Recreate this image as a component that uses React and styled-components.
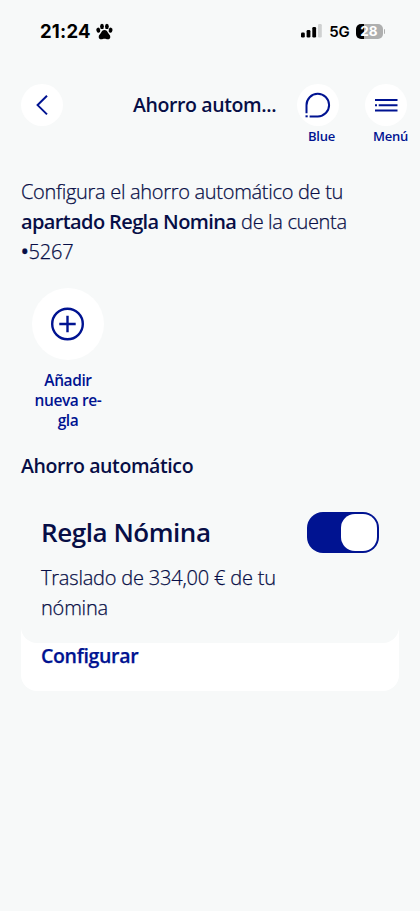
import styled, { createGlobalStyle } from "styled-components"

const GlobalStyle = createGlobalStyle`
    * {
        box-sizing: border-box;
    }
    body {
        margin: 0;
        background: #f7f9f9;
        color: #070e46;
        font-family: "Open Sans", sans-serif;
    }
    p, h1, h2, h3 {
        margin: 0;
    }
    button {
        border: none;
        padding: 0;
        background: none;
        font-family: inherit;
    }
    svg {
        display: block;
    }
`
const Screen = styled.div`
    min-height: 911px;
    overflow: hidden;
`
const StatusBar = styled.div`
    height: 84px;
    padding: 19px 35px 0 40px;
    display: flex;
    align-items: flex-start;
    justify-content: space-between;
    font-family: Inter, sans-serif;
    color: #000;
`
const Clock = styled.div`
    display: flex;
    align-items: center;
    gap: 5px;
    height: 24px;
    font-size: 18.5px;
    font-weight: 700;
    letter-spacing: 0.2px;
`
const StatusIcons = styled.div`
    display: flex;
    align-items: center;
    height: 24px;
`
const Network = styled.span`
    margin: 0 6px 0 7px;
    font-size: 15px;
    font-weight: 600;
    letter-spacing: -0.2px;
`
const Battery = styled.div`
    width: 27px;
    height: 15px;
    border-radius: 5px;
    background: linear-gradient(to right, #000 28%, #aeafaf 28%);
    color: #fff;
    font-size: 13.5px;
    font-weight: 700;
    line-height: 15px;
    text-align: center;
`
const BatteryTip = styled.div`
    width: 1.5px;
    height: 5px;
    margin-left: 1px;
    border-radius: 0 2px 2px 0;
    background: #aeafaf;
`
const Header = styled.header`
    height: 93px;
    padding: 0 12px 0 21px;
    display: flex;
    align-items: flex-start;
`
const RoundButton = styled.button`
    width: ${props => props.$size}px;
    height: ${props => props.$size}px;
    border-radius: 50%;
    background: #fff;
    color: #001391;
    display: flex;
    justify-content: center;
    align-items: center;
`
const Title = styled.h1`
    width: 164px;
    margin-left: 70px;
    font-size: 19.5px;
    font-weight: 600;
    line-height: 41px;
    letter-spacing: -0.38px;
    white-space: nowrap;
`
const HeaderAction = styled.div`
    width: 43px;
    & + & {
        margin-left: 25px;
    }
`
const HeaderLabel = styled.p`
    padding-left: ${props => props.$indent}px;
    color: #001391;
    font-size: 13px;
    font-weight: 600;
    line-height: 20px;
    letter-spacing: -0.25px;
    white-space: nowrap;
`
const Main = styled.main`
    padding: 0 21px;
`
const Intro = styled.p`
    font-size: 20px;
    font-weight: 300;
    line-height: 30px;
    white-space: nowrap;
`
const Line = styled.span`
    display: block;
    letter-spacing: ${props => props.$spacing};
    -webkit-text-stroke: 0.25px currentColor;
    strong {
        font-weight: 600;
        letter-spacing: -0.62px;
        -webkit-text-stroke: 0;
    }
`
const Bullet = styled.span`
    font-weight: 600;
`
const NewRule = styled.div`
    width: 94px;
    margin-top: 21px;
    display: flex;
    flex-direction: column;
    align-items: center;
`
const NewRuleLabel = styled.p`
    margin-top: 10px;
    color: #001391;
    font-size: 15.5px;
    font-weight: 600;
    line-height: 20px;
    letter-spacing: -0.4px;
    text-align: center;
`
const SectionTitle = styled.h2`
    margin-top: 21px;
    font-size: 19.5px;
    font-weight: 600;
    line-height: 30px;
    letter-spacing: -0.4px;
`
const Card = styled.section`
    margin-top: 11px;
    border-radius: 0 0 16px 16px;
    background: #fff;
`
const CardBody = styled.div`
    height: 151px;
    padding: 20px 20px 0 20px;
    border-radius: 0 0 16px 16px;
    background: #f7f9f9;
`
const CardTop = styled.div`
    display: flex;
    justify-content: space-between;
    align-items: center;
    height: 41px;
`
const CardTitle = styled.h3`
    padding-bottom: 2px;
    font-size: 26px;
    font-weight: 600;
    letter-spacing: -0.45px;
`
const Toggle = styled.button`
    width: 72px;
    height: 41px;
    padding: 2px;
    border-radius: 16px;
    background: #001391;
    display: flex;
    justify-content: flex-end;
`
const Knob = styled.span`
    width: 36px;
    height: 37px;
    border-radius: 14px;
    background: #fff;
`
const CardText = styled.p`
    margin-top: 10px;
    font-size: 20px;
    font-weight: 300;
    line-height: 30px;
`
const CardAction = styled.button`
    display: block;
    height: 48px;
    padding: 0 20px 23px;
    color: #001391;
    font-size: 19.5px;
    font-weight: 600;
    line-height: 25px;
    letter-spacing: -0.32px;
    -webkit-text-stroke: 0.25px currentColor;
`

function PawIcon() {
    return (
        <svg width="17" height="17" viewBox="0 0 17 17">
            <ellipse cx="2.3" cy="7.2" rx="1.9" ry="2.6" transform="rotate(-12 2.3 7.2)" />
            <ellipse cx="6" cy="3.4" rx="1.9" ry="2.7" />
            <ellipse cx="10.9" cy="3.4" rx="1.9" ry="2.7" />
            <ellipse cx="14.6" cy="7.2" rx="1.9" ry="2.6" transform="rotate(12 14.6 7.2)" />
            <path d="M8.5 7C6.6 7 5.7 8.4 5 9.8C4.2 11.3 2.7 12 2.7 13.9C2.7 15.4 3.8 16.3 5.2 16.3C6.5 16.3 7.2 15.7 8.5 15.7S10.5 16.3 11.8 16.3C13.2 16.3 14.3 15.4 14.3 13.9C14.3 12 12.8 11.3 12 9.8C11.3 8.4 10.4 7 8.5 7Z" />
        </svg>
    )
}

function Signal() {
    return (
        <svg width="21" height="14" viewBox="0 0 21 14">
            <rect x="0" y="8.5" width="3.8" height="5" rx="1.2" />
            <rect x="5.6" y="6" width="3.8" height="7.5" rx="1.2" />
            <rect x="11.3" y="3" width="3.8" height="10.5" rx="1.2" />
            <rect x="17" y="0" width="3.8" height="13.5" rx="1.2" fill="#cfd1d1" />
        </svg>
    )
}

function BackIcon() {
    return (
        <svg width="42" height="42" viewBox="0 0 42 42" fill="none" stroke="currentColor" strokeWidth="2">
            <path d="M26 11.8L16.6 21.1L26 30.4" />
        </svg>
    )
}

function ChatIcon() {
    return (
        <svg width="42" height="42" viewBox="0 0 42 42" fill="none" stroke="currentColor" strokeWidth="2">
            <path d="M9.5 29.3V21.3A11.3 11.3 0 1 1 20.8 32.4H12.6" />
            <path d="M8.5 32.3H10.7" />
        </svg>
    )
}

function MenuIcon() {
    return (
        <svg width="42" height="42" viewBox="0 0 42 42" fill="none" stroke="currentColor" strokeWidth="2">
            <path d="M10 16H32.5M13.7 21.2H32.5M10 26.4H32.5M10 21.2H12" />
        </svg>
    )
}

function PlusIcon() {
    return (
        <svg width="34" height="34" viewBox="0 0 34 34" fill="none" stroke="currentColor" strokeWidth="2.4">
            <circle cx="16.5" cy="17" r="15.3" />
            <path d="M16.5 8.8V25.2M8.3 17H24.7" />
        </svg>
    )
}

export default function App() {
    return (
        <Screen>
            <GlobalStyle />
            <StatusBar>
                <Clock>
                    21:24
                    <PawIcon />
                </Clock>
                <StatusIcons>
                    <Signal />
                    <Network>5G</Network>
                    <Battery>28</Battery>
                    <BatteryTip />
                </StatusIcons>
            </StatusBar>
            <Header>
                <RoundButton $size={42} aria-label="Volver">
                    <BackIcon />
                </RoundButton>
                <Title>Ahorro autom...</Title>
                <HeaderAction>
                    <RoundButton $size={42}>
                        <ChatIcon />
                    </RoundButton>
                    <HeaderLabel $indent={11}>Blue</HeaderLabel>
                </HeaderAction>
                <HeaderAction>
                    <RoundButton $size={42}>
                        <MenuIcon />
                    </RoundButton>
                    <HeaderLabel $indent={8}>Menú</HeaderLabel>
                </HeaderAction>
            </Header>
            <Main>
                <Intro>
                    <Line $spacing="-0.3px">Configura el ahorro automático de tu</Line>
                    <Line $spacing="-0.35px"><strong>apartado Regla Nomina</strong> de la cuenta</Line>
                    <Line $spacing="-0.15px"><Bullet>•</Bullet>5267</Line>
                </Intro>
                <NewRule>
                    <RoundButton $size={72}>
                        <PlusIcon />
                    </RoundButton>
                    <NewRuleLabel>
                        Añadir<br />nueva re-<br />gla
                    </NewRuleLabel>
                </NewRule>
                <SectionTitle>Ahorro automático</SectionTitle>
                <Card>
                    <CardBody>
                        <CardTop>
                            <CardTitle>Regla Nómina</CardTitle>
                            <Toggle role="switch" aria-checked="true">
                                <Knob />
                            </Toggle>
                        </CardTop>
                        <CardText>
                            <Line $spacing="-0.2px">Traslado de 334,00 € de tu</Line>
                            <Line $spacing="-0.2px">nómina</Line>
                        </CardText>
                    </CardBody>
                    <CardAction>Configurar</CardAction>
                </Card>
            </Main>
        </Screen>
    )
}
